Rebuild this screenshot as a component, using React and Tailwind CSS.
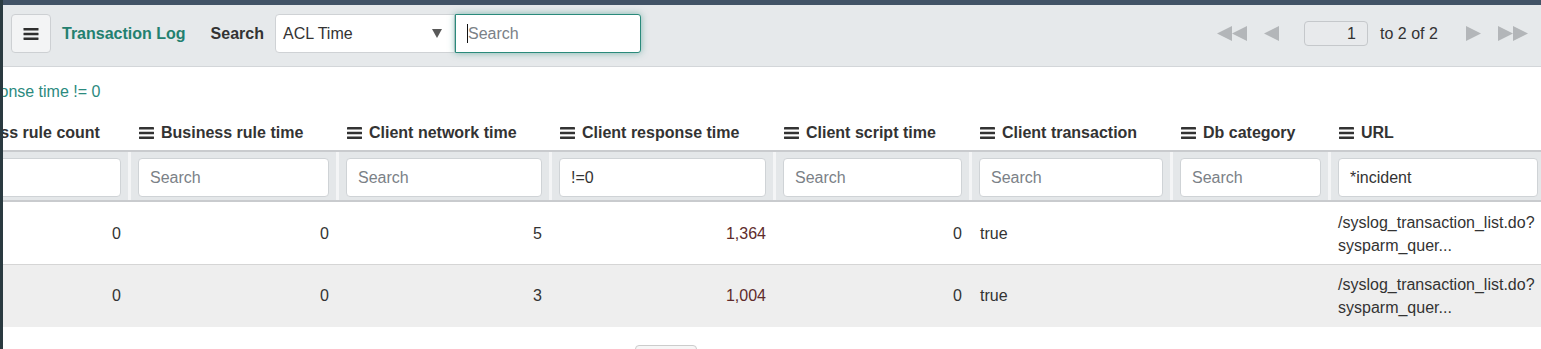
import React from "react";

const Bars = ({ w = 15, h = 12, cls = "" }) => (
  <svg width={w} height={h} viewBox="0 0 15 12" className={cls} aria-hidden="true">
    <rect x="0" y="0" width="15" height="2.6" rx="0.4" fill="currentColor" />
    <rect x="0" y="4.7" width="15" height="2.6" rx="0.4" fill="currentColor" />
    <rect x="0" y="9.4" width="15" height="2.6" rx="0.4" fill="currentColor" />
  </svg>
);

const TriL = () => (
  <svg width="15" height="15" viewBox="0 0 15 15" aria-hidden="true">
    <polygon points="15,0 15,15 0,7.5" fill="#b3b6b9" />
  </svg>
);
const TriR = () => (
  <svg width="15" height="15" viewBox="0 0 15 15" aria-hidden="true">
    <polygon points="0,0 0,15 15,7.5" fill="#b3b6b9" />
  </svg>
);

const cols = [
  { label: "Business rule count", filter: "" },
  { label: "Business rule time", filter: "Search" },
  { label: "Client network time", filter: "Search" },
  { label: "Client response time", filter: "!=0", value: true },
  { label: "Client script time", filter: "Search" },
  { label: "Client transaction", filter: "Search" },
  { label: "Db category", filter: "Search" },
  { label: "URL", filter: "*incident", value: true },
];

const rows = [
  ["0", "0", "5", "1,364", "0", "true", "", "url"],
  ["0", "0", "3", "1,004", "0", "true", "", "url"],
];

const gridCls =
  "grid grid-cols-[214px_208px_213px_224px_196px_201px_158px_217px]";

export default function App() {
  return (
    <div
      className="flex w-[1541px] h-[349px] overflow-hidden bg-white text-[#333333]"
      style={{ fontFamily: '"Liberation Sans", Arial, sans-serif' }}
    >
      <div className="w-[3px] shrink-0 bg-[#2a3a40]" />
      <div className="flex-1 min-w-0 flex flex-col overflow-hidden">
        <div className="h-[5px] bg-[#425366] shrink-0" />
        {/* Header */}
        <div className="h-[62px] shrink-0 bg-[#e6e9eb] border-b border-[#d3d6d9] flex items-start pt-[9px] pl-[8px] pr-[13px]">
          <button className="w-[40px] h-[39px] rounded-[4px] border border-[#cdd0d3] bg-[#f3f4f5] flex items-center justify-center text-[#2f2f2f]">
            <Bars w={16} h={12} />
          </button>
          <div className="ml-[11px] h-[39px] flex items-center text-[16px] font-bold text-[#23806f]">
            Transaction Log
          </div>
          <div className="ml-[25px] h-[39px] flex items-center text-[16px] font-bold text-[#333333]">
            Search
          </div>
          <div className="ml-[11px] w-[180px] h-[39px] bg-white border border-[#cfd2d5] rounded-l-[4px] flex items-center pl-[7px] pr-[12px] text-[16px] text-[#333333]">
            <span className="flex-1">ACL Time</span>
            <svg width="10" height="9" viewBox="0 0 10 9" aria-hidden="true">
              <polygon points="0,0 10,0 5,9" fill="#595959" />
            </svg>
          </div>
          <div className="w-[186px] h-[39px] bg-white border border-[#2a8a7b] rounded-r-[3px] shadow-[0_0_7px_rgba(42,138,123,0.55)] flex items-center pl-[11px] text-[16px]">
            <span className="w-[1px] h-[19px] bg-[#111111]" />
            <span className="text-[#7b8187]">Search</span>
          </div>
          <div className="ml-auto h-[39px] flex items-center">
            <div className="flex">
              <TriL />
              <TriL />
            </div>
            <div className="ml-[17px]">
              <TriL />
            </div>
            <div className="ml-[25px] w-[64px] h-[25px] rounded-[4px] border border-[#c5c8cb] bg-[#e8eaec] flex items-center justify-end pr-[11px] text-[16px] text-[#333333]">
              1
            </div>
            <div className="ml-[12px] w-[61px] text-[16px] text-[#333333] whitespace-nowrap">to 2 of 2</div>
            <div className="ml-[25px]">
              <TriR />
            </div>
            <div className="ml-[17px] flex">
              <TriR />
              <TriR />
            </div>
          </div>
        </div>

        {/* Content */}
        <div className="flex-1 overflow-hidden">
          <div className="h-[48px] pt-[13px] leading-[24px] text-[16px] text-[#2b8a7e] whitespace-nowrap">
            <span className="ml-[-80px] inline-block">Client response time != 0</span>
          </div>
          <div className="ml-[-89px] w-max">
            {/* Column headers */}
            <div className={`${gridCls} h-[35px]`}>
              {cols.map((c, i) => (
                <div
                  key={i}
                  className="flex items-center gap-[7px] pl-[11px] text-[16px] font-bold text-[#333333] whitespace-nowrap"
                >
                  <Bars cls="text-[#333333] shrink-0" />
                  <span>{c.label}</span>
                </div>
              ))}
            </div>
            {/* Filters */}
            <div className={`${gridCls} bg-[#e4e7e9] border-y-2 border-[#c9cbce]`}>
              {cols.map((c, i) => (
                <div
                  key={i}
                  className={`${i === 0 ? "" : "border-l-[3px] border-[#f4f5f6]"} px-[7px] pt-[6px] pb-[3px]`}
                >
                  <div className="h-[39px] rounded-[4px] border border-[#cfd3d6] bg-white flex items-center px-[11px] text-[16px] whitespace-nowrap">
                    {c.filter === "Search" ? (
                      <span className="text-[#7b8187]">Search</span>
                    ) : (
                      <span className="text-[#333333]">{c.filter}</span>
                    )}
                  </div>
                </div>
              ))}
            </div>
            {/* Rows */}
            {rows.map((r, ri) => (
              <div
                key={ri}
                className={`${gridCls} ${ri === 0 ? "h-[63px] pt-[1px] bg-white border-b border-[#d5d5d5]" : "bg-[#eeeeee] h-[62px]"}`}
              >
                {r.map((v, ci) => {
                  if (v === "url") {
                    return (
                      <div
                        key={ci}
                        className="border-l-[3px] border-transparent px-[7px] flex flex-col justify-center leading-[23px] text-[16px] text-[#333333] whitespace-nowrap"
                      >
                        <span>/syslog_transaction_list.do?</span>
                        <span>sysparm_quer...</span>
                      </div>
                    );
                  }
                  const left = ci === 5 || ci === 6;
                  return (
                    <div
                      key={ci}
                      className={`${ci === 0 ? "" : "border-l-[3px] border-transparent"} px-[7px] flex items-center ${left ? "justify-start pl-[8px]" : "justify-end"} text-[16px] ${ci === 3 ? "text-[#5e2b2b]" : "text-[#333333]"}`}
                    >
                      {v}
                    </div>
                  );
                })}
              </div>
            ))}
          </div>
          <div className="mt-[18px] ml-[632px] w-[62px] h-[10px] rounded-t-[4px] border border-[#cccccc] bg-[#f6f6f6]" />
        </div>
      </div>
    </div>
  );
}
